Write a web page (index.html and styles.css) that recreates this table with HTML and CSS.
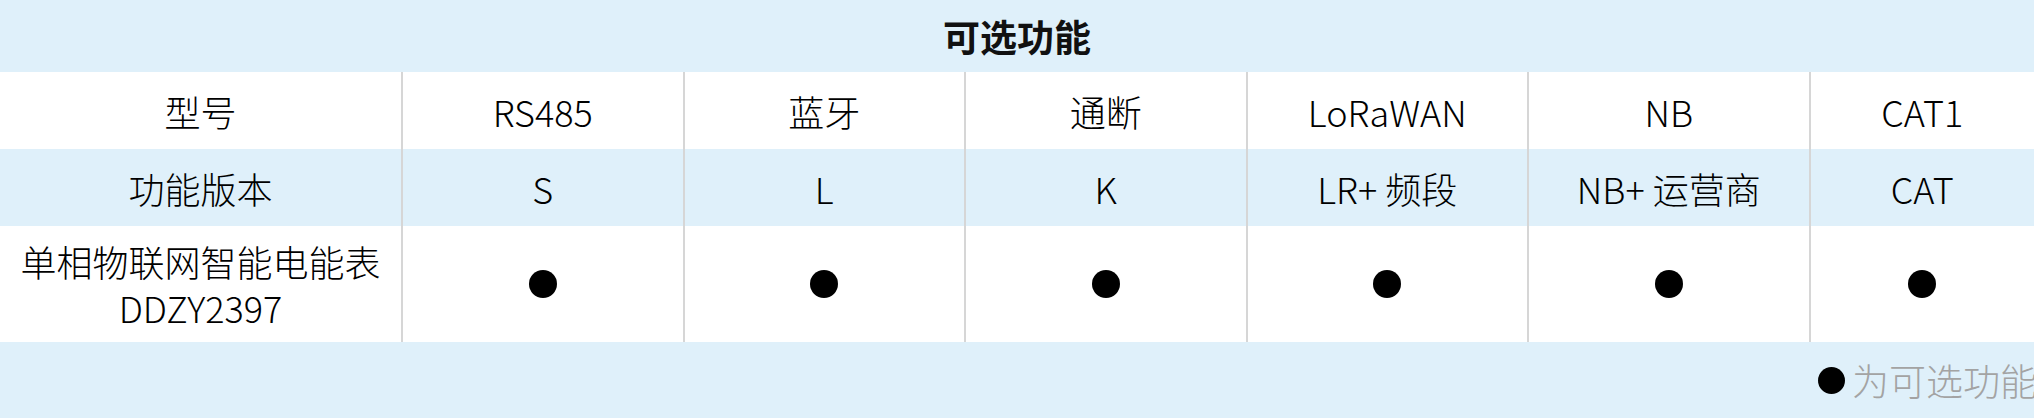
FILE: index.html
```html
<!DOCTYPE html>
<html lang="zh-CN">
<head>
<meta charset="utf-8">
<title>可选功能</title>
<link rel="stylesheet" href="styles.css">
</head>
<body>
<div class="spec">
  <div class="title">可选功能</div>
  <div class="row row-white">
    <div class="cell cell-first">型号</div>
    <div class="cell">RS485</div>
    <div class="cell">蓝牙</div>
    <div class="cell">通断</div>
    <div class="cell">LoRaWAN</div>
    <div class="cell">NB</div>
    <div class="cell">CAT1</div>
  </div>
  <div class="row row-blue">
    <div class="cell cell-first">功能版本</div>
    <div class="cell">S</div>
    <div class="cell">L</div>
    <div class="cell">K</div>
    <div class="cell">LR+ 频段</div>
    <div class="cell">NB+ 运营商</div>
    <div class="cell">CAT</div>
  </div>
  <div class="row row-white row-tall">
    <div class="cell cell-first cell-multi"><span>单相物联网智能电能表</span><span>DDZY2397</span></div>
    <div class="cell"><span class="dot"></span></div>
    <div class="cell"><span class="dot"></span></div>
    <div class="cell"><span class="dot"></span></div>
    <div class="cell"><span class="dot"></span></div>
    <div class="cell"><span class="dot"></span></div>
    <div class="cell"><span class="dot"></span></div>
  </div>
  <div class="note-row">
    <div class="note"><span class="dot dot-note"></span>为可选功能</div>
  </div>
</div>
</body>
</html>
```

FILE: styles.css
```css
html, body {
  margin: 0;
  padding: 0;
  overflow: hidden;
  background: #ffffff;
}

.spec {
  width: 2034px;
  font-family: "Noto Sans CJK SC", "Noto Sans", sans-serif;
  font-weight: 300;
  font-size: 36px;
  color: #000000;
}

.title {
  height: 72px;
  display: flex;
  align-items: center;
  justify-content: center;
  background: #dff0fa;
  font-weight: 700;
  font-size: 37px;
  color: #111111;
}

.row {
  display: grid;
  grid-template-columns: 401px repeat(5, 281.5px) 1fr;
  height: 77px;
}

.row-white {
  background: #ffffff;
}

.row-blue {
  background: #dff0fa;
}

.row-tall {
  height: 116px;
}

.cell {
  display: flex;
  align-items: center;
  justify-content: center;
  text-align: center;
  border-left: 2px solid #d6d6d6;
  line-height: 46px;
  white-space: nowrap;
}

.cell-first {
  border-left: none;
}

.cell-multi {
  flex-direction: column;
}

.cell-multi span {
  display: block;
  line-height: 46px;
  height: 46px;
}

.dot {
  display: inline-block;
  width: 28px;
  height: 28px;
  border-radius: 50%;
  background: #000000;
}

.note-row {
  height: 76px;
  background: #dff0fa;
  display: grid;
  grid-template-columns: 1809px 1fr;
  overflow: hidden;
}

.note {
  grid-column: 2;
  display: flex;
  align-items: center;
  gap: 7px;
  padding-left: 9px;
  color: #a3a3a3;
  font-size: 37px;
  white-space: nowrap;
}

.dot-note {
  width: 27px;
  height: 27px;
  flex: none;
}
```
